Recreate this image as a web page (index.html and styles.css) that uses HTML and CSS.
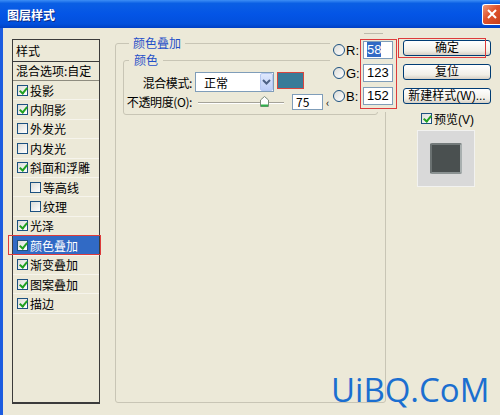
FILE: index.html
```html
<!DOCTYPE html>
<html lang="zh">
  <head>
    <meta charset="utf-8">
    <title>图层样式</title>
    <link rel="stylesheet" href="styles.css">
  </head>
  <body>
    <div class="window">
      <div class="titlebar">
        <span class="title">图层样式</span>
        <span class="close">
          <svg width="10" height="10" viewBox="0 0 10 10"><path d="M1 1 L9 9 M9 1 L1 9" stroke="#fff" stroke-width="2"/></svg>
        </span>
      </div>

      <div class="body">
        <!-- style list on the left -->
        <div class="list">
          <div class="list-head">样式</div>
          <div class="list-blend">混合选项:自定</div>
          <div class="item"><span class="cb on"></span>投影</div>
          <div class="item"><span class="cb on"></span>内阴影</div>
          <div class="item"><span class="cb"></span>外发光</div>
          <div class="item"><span class="cb"></span>内发光</div>
          <div class="item"><span class="cb on"></span>斜面和浮雕</div>
          <div class="item sub"><span class="cb"></span>等高线</div>
          <div class="item sub"><span class="cb"></span>纹理</div>
          <div class="item"><span class="cb on"></span>光泽</div>
          <div class="item selected"><span class="cb on"></span>颜色叠加</div>
          <div class="item"><span class="cb on"></span>渐变叠加</div>
          <div class="item"><span class="cb on"></span>图案叠加</div>
          <div class="item"><span class="cb on"></span>描边</div>
        </div>

        <!-- settings panel -->
        <div class="middle">
          <fieldset class="group">
            <legend>颜色叠加</legend>
            <fieldset class="group inner">
              <legend>颜色</legend>
              <div class="row">
                <span class="label">混合模式:</span>
                <div class="select">
                  <span class="select-text">正常</span>
                  <span class="select-btn">
                    <svg width="9" height="6" viewBox="0 0 9 6"><path d="M1 1 L4.5 4.5 L8 1" fill="none" stroke="#4d6185" stroke-width="2"/></svg>
                  </span>
                </div>
                <span class="swatch"></span>
              </div>
              <div class="row row2">
                <span class="label">不透明度(O):</span>
                <div class="slider">
                  <span class="track"></span>
                  <svg class="thumb" width="9" height="11" viewBox="0 0 9 11"><path d="M0.5 4 L4.5 0.5 L8.5 4 L8.5 10.5 L0.5 10.5 Z" fill="#fff" stroke="#7a8a7a"/><path d="M1 9.5 H8" stroke="#2fb04a" stroke-width="2"/></svg>
                </div>
                <span class="field small">75</span>
                <span class="tick">‹</span>
              </div>
            </fieldset>
          </fieldset>

          <div class="rgb">
            <div class="rgb-cap"></div>
            <div class="rgb-row"><span class="radio"></span><span class="rgb-label">R:</span><span class="field"><span class="hl">58</span></span></div>
            <div class="rgb-row"><span class="radio"></span><span class="rgb-label">G:</span><span class="field">123</span></div>
            <div class="rgb-row"><span class="radio"></span><span class="rgb-label">B:</span><span class="field">152</span></div>
          </div>
        </div>

        <!-- buttons on the right -->
        <div class="side">
          <div class="btn">确定</div>
          <div class="btn">复位</div>
          <div class="btn">新建样式(W)...</div>
          <div class="preview-check"><span class="cb on"></span>预览(V)</div>
          <div class="preview">
            <div class="preview-box"></div>
          </div>
        </div>
      </div>

      <div class="mark mark-row"></div>
      <div class="mark mark-rgb"></div>
      <div class="mark mark-ok"></div>
      <div class="watermark">UiBQ.CoM</div>
    </div>
  </body>
</html>
```

FILE: styles.css
```css
* {
  box-sizing: border-box;
}

body {
  margin: 0;
  font-family: "Liberation Sans", "Noto Sans CJK SC", sans-serif;
  font-size: 12px;
  color: #000;
}

.window {
  position: relative;
  width: 500px;
  height: 415px;
  background: #ECE9D8;
  overflow: hidden;
}

.titlebar {
  height: 28px;
  display: flex;
  align-items: center;
  justify-content: space-between;
  padding-left: 7px;
  background: linear-gradient(#3d8ef5 0%, #0a5fe4 12%, #0455e6 50%, #0250dc 85%, #0040c4 100%);
}

.title {
  color: #fff;
  font-family: "Noto Sans CJK SC", sans-serif;
  font-weight: bold;
  font-size: 12px;
  text-shadow: 1px 1px 0 #0b2a86;
}

.close {
  width: 18px;
  height: 21px;
  border: 1px solid #fff;
  border-right: none;
  border-radius: 3px 0 0 3px;
  background: linear-gradient(135deg, #f09a7a, #e0532d 45%, #c8401c);
  display: flex;
  align-items: center;
  justify-content: center;
}

.body {
  display: flex;
  align-items: flex-start;
  height: 387px;
  border-left: 3px solid #1c5ce0;
  padding-top: 11px;
}

/* list */
.list {
  margin-left: 9px;
  width: 88px;
  height: 365px;
  border: 1px solid #3b3b3b;
  border-bottom-width: 2px;
  font-family: "Noto Sans CJK SC", sans-serif;
}

.list-head {
  height: 22px;
  line-height: 21px;
  padding-left: 3px;
  border-bottom: 1px solid #3b3b3b;
}

.list-blend {
  height: 19px;
  line-height: 18px;
  padding-left: 3px;
  border-bottom: 1px solid #8e8c80;
}

.item {
  height: 19.4px;
  display: flex;
  align-items: center;
  border-bottom: 1px solid #f6f4ec;
}

.item .cb {
  margin-left: 4px;
  margin-right: 2px;
}

.item.sub .cb {
  margin-left: 17px;
}

.item.selected {
  background: #316ac5;
  color: #fff;
}

.cb {
  position: relative;
  display: inline-block;
  width: 11px;
  height: 11px;
  border: 1px solid #1c5180;
  background: linear-gradient(135deg, #dcdcd7, #fff);
  flex: none;
}

.cb.on::after {
  content: "";
  position: absolute;
  left: 3px;
  top: 0px;
  width: 3px;
  height: 6px;
  border-right: 2px solid #21a121;
  border-bottom: 2px solid #21a121;
  transform: rotate(40deg);
}

/* middle panel */
.middle {
  position: relative;
  margin-left: 15px;
  margin-top: -3px;
  width: 271px;
  height: 367px;
}

.group {
  margin: 0;
  padding: 0 7px;
  height: 100%;
  border: 1px solid #c8c5b5;
  border-radius: 3px;
  font-family: "Noto Sans CJK SC", sans-serif;
}

.group legend {
  margin-left: 6px;
  padding: 0 4px;
  line-height: 14px;
  color: #1f4fc8;
}

.group.inner {
  margin-top: 3px;
  padding: 5px 0 4px 0;
  height: 62px;
}

.group.inner legend {
  margin-left: 5px;
  padding: 0 5px;
}

.row {
  display: flex;
  align-items: center;
  height: 20px;
}

.row2 {
  height: 17px;
  margin-top: 1px;
}

.label {
  width: 68px;
  text-align: right;
  white-space: nowrap;
  letter-spacing: -0.4px;
}

.select {
  margin-left: 3px;
  width: 79px;
  height: 20px;
  border: 1px solid #7f9db9;
  background: #fff;
  display: flex;
  align-items: center;
  justify-content: space-between;
}

.select-text {
  padding-left: 8px;
}

.select-btn {
  width: 13px;
  height: 18px;
  border: 1px solid #b6c8f2;
  border-radius: 2px;
  background: linear-gradient(#dfe8fc, #bccdf8);
  display: flex;
  align-items: center;
  justify-content: center;
}

.swatch {
  margin-left: 3px;
  margin-top: -3px;
  width: 27px;
  height: 17px;
  border: 1px solid #d9453e;
  background: #3a7b98;
}

.slider {
  position: relative;
  margin-left: 6px;
  width: 86px;
  height: 12px;
}

.track {
  position: absolute;
  left: 0;
  right: 0;
  top: 6px;
  border-top: 1px solid #a5a399;
  border-bottom: 1px solid #fff;
}

.thumb {
  position: absolute;
  left: 62px;
  top: 0;
}

.field {
  display: inline-block;
  width: 30px;
  height: 18px;
  border: 1px solid #7f9db9;
  background: #fff;
  font-size: 13px;
  line-height: 16px;
  padding-left: 3px;
}

.field.small {
  margin-left: 8px;
  width: 31px;
  height: 16px;
  font-size: 12px;
  line-height: 14px;
}

.tick {
  margin-left: 3px;
  font-size: 11px;
}

.hl {
  background: #316ac5;
  color: #fff;
}

/* rgb values, pasted over the panel */
.rgb {
  position: absolute;
  left: 215px;
  top: -4px;
  width: 67px;
  height: 80px;
  padding-top: 1px;
  background: #ECE9D8;
}

.rgb-cap {
  margin: 0 0 7px 34px;
  width: 19px;
  height: 1px;
  background: #bdbaab;
}

.rgb-row {
  display: flex;
  align-items: center;
  height: 18px;
  margin-bottom: 5px;
}

.radio {
  margin-left: 3px;
  width: 12px;
  height: 12px;
  border: 1px solid #1c5180;
  border-radius: 50%;
  background: linear-gradient(135deg, #dcdcd7, #fff);
}

.rgb-label {
  width: 18px;
  padding-left: 1px;
  font-size: 13px;
}

/* right column */
.side {
  margin-left: 17px;
  margin-top: 1px;
  width: 88px;
}

.btn {
  height: 16px;
  margin-bottom: 8px;
  border: 1px solid #003c74;
  border-radius: 3px;
  background: linear-gradient(#fff, #f1efe7 70%, #d6d0c5);
  text-align: center;
  line-height: 14px;
}

.preview-check {
  display: flex;
  align-items: center;
  height: 12px;
  margin-left: 18px;
}

.preview-check .cb {
  margin-right: 2px;
}

.preview {
  margin: 6px 0 0 14px;
  width: 58px;
  height: 57px;
  background: #d9d9d9;
  border: 1px solid #f2f2f0;
  display: flex;
  align-items: center;
  justify-content: center;
}

.preview-box {
  width: 32px;
  height: 31px;
  border: 2px solid;
  border-color: #737a7a #a8afaf #8b9292 #6a7171;
  border-radius: 2px;
  background: #4a5050;
}

/* red annotation boxes */
.mark {
  position: absolute;
  border: 1px solid #dd3b3b;
}

.mark-row {
  left: 8px;
  top: 235px;
  width: 93px;
  height: 20px;
}

.mark-rgb {
  left: 360px;
  top: 39px;
  width: 37px;
  height: 70px;
}

.mark-ok {
  left: 398px;
  top: 38px;
  width: 88px;
  height: 20px;
}

.watermark {
  position: absolute;
  left: 331px;
  top: 373px;
  font-family: "Open Sans", sans-serif;
  font-size: 33px;
  line-height: 33px;
  color: #1b6fd0;
}
```
